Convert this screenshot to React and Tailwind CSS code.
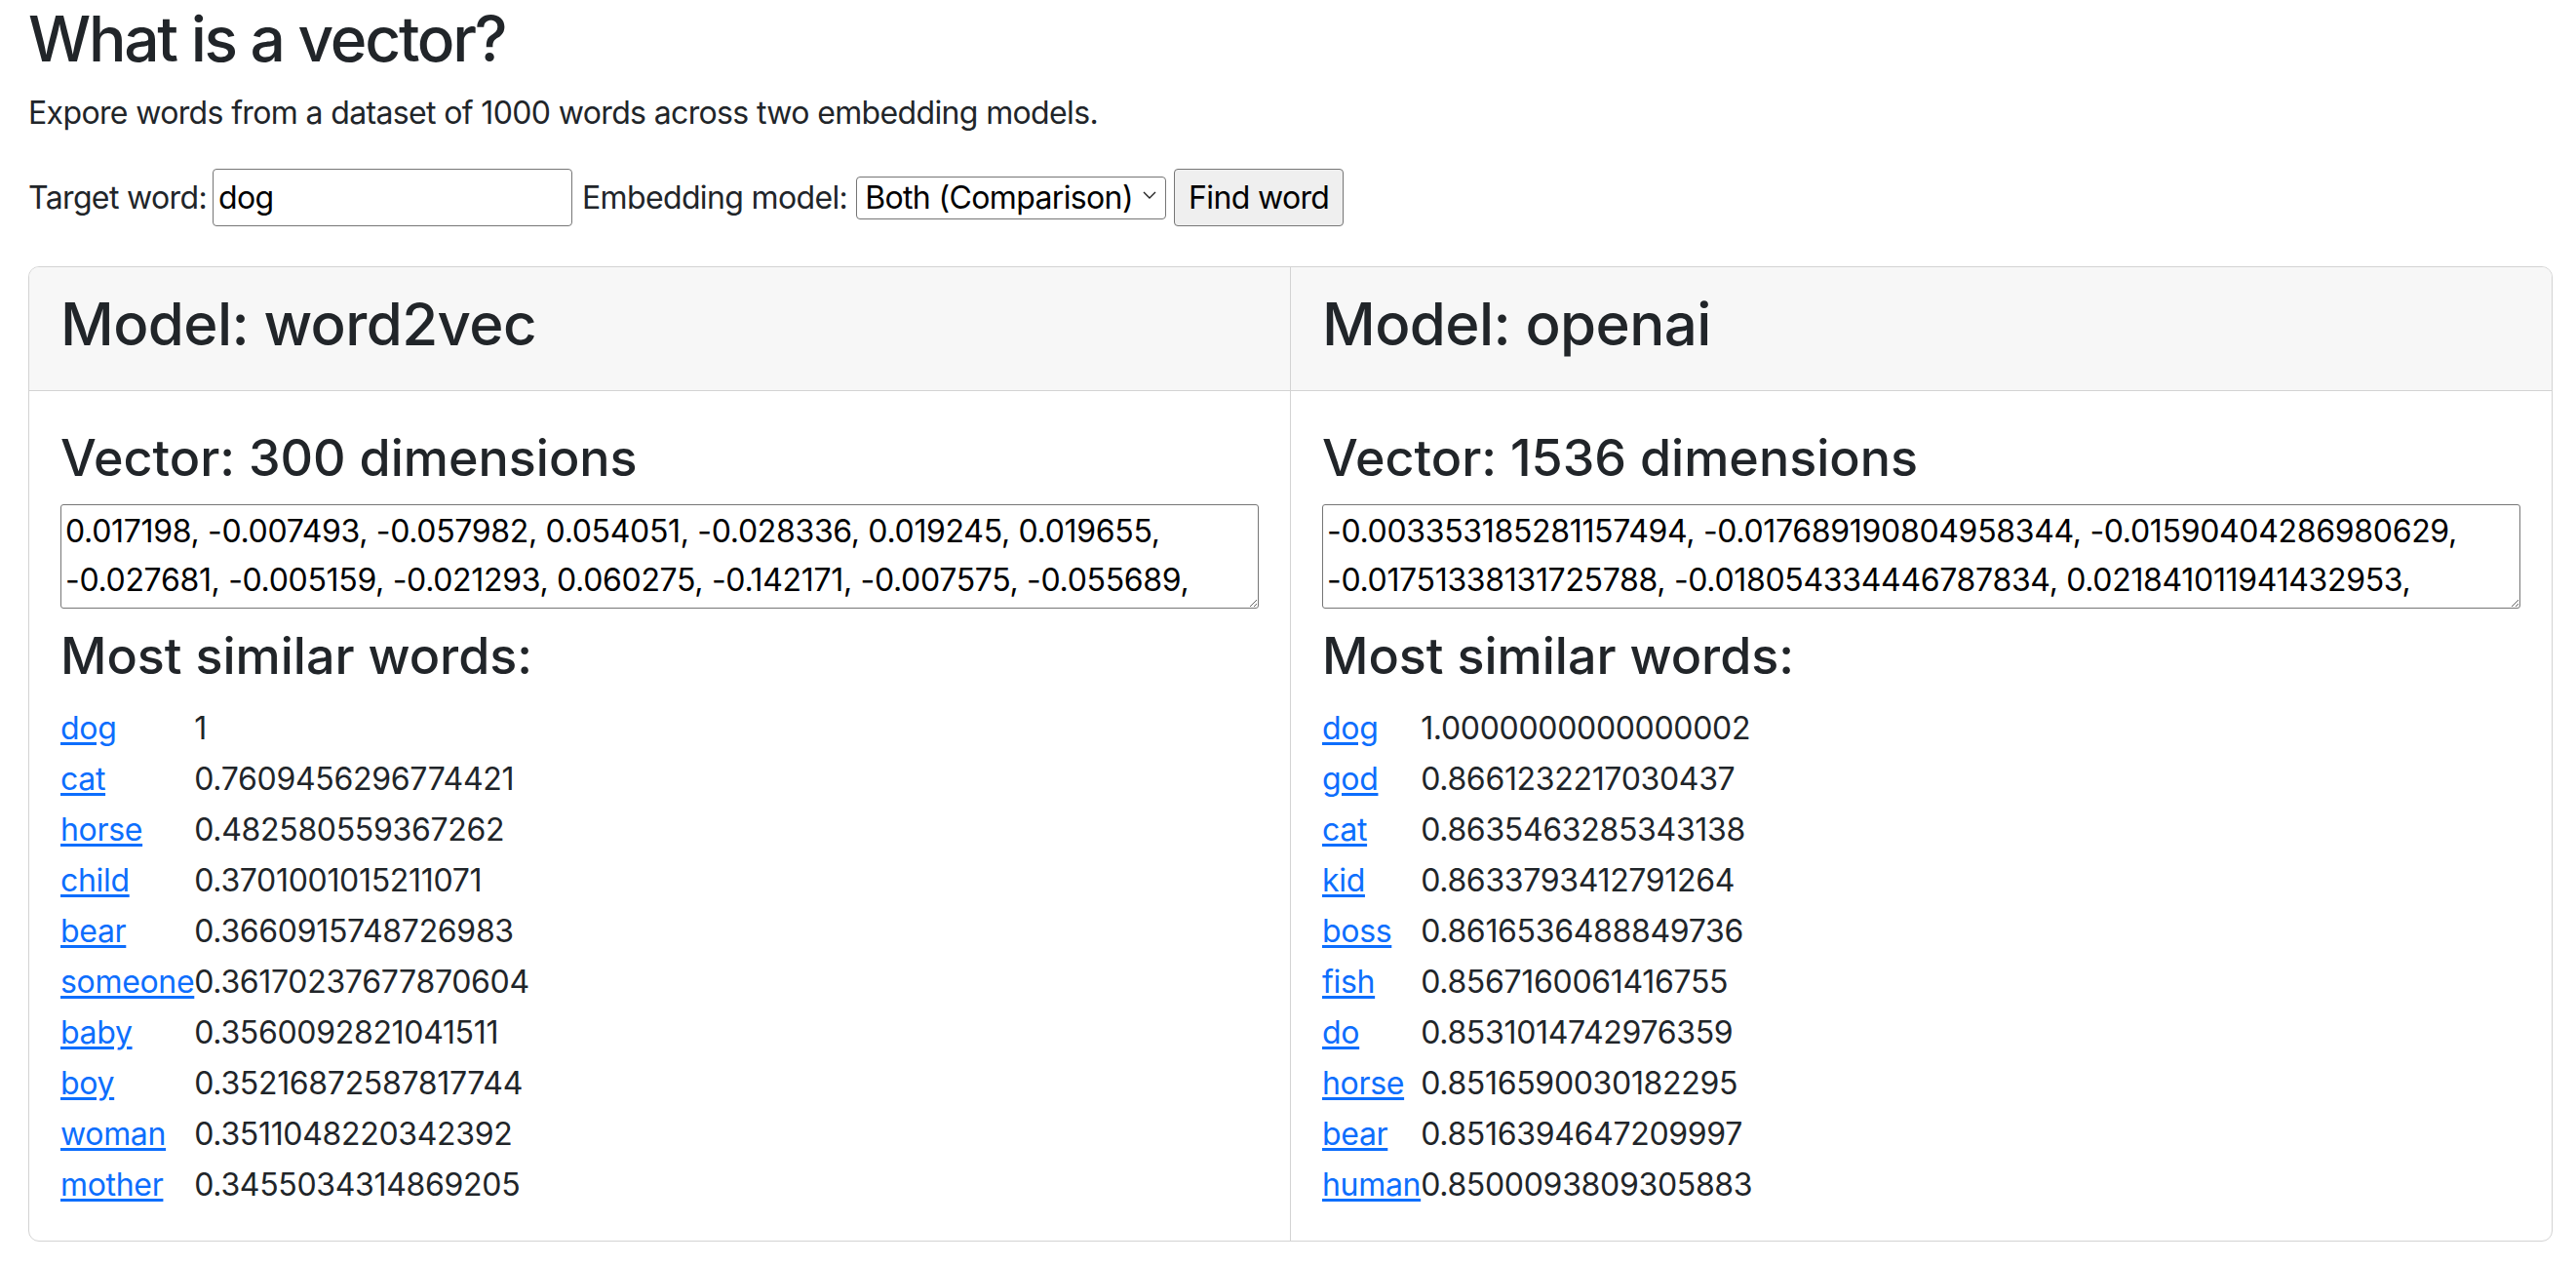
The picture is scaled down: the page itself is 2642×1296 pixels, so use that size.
import { useState } from "react";

const w2v = [
  ["dog", "1"],
  ["cat", "0.7609456296774421"],
  ["horse", "0.482580559367262"],
  ["child", "0.3701001015211071"],
  ["bear", "0.3660915748726983"],
  ["someone", "0.36170237677870604"],
  ["baby", "0.3560092821041511"],
  ["boy", "0.35216872587817744"],
  ["woman", "0.3511048220342392"],
  ["mother", "0.3455034314869205"],
];

const openai = [
  ["dog", "1.0000000000000002"],
  ["god", "0.8661232217030437"],
  ["cat", "0.8635463285343138"],
  ["kid", "0.8633793412791264"],
  ["boss", "0.8616536488849736"],
  ["fish", "0.8567160061416755"],
  ["do", "0.8531014742976359"],
  ["horse", "0.8516590030182295"],
  ["bear", "0.8516394647209997"],
  ["human", "0.8500093809305883"],
];

const w2vVector =
  "0.017198, -0.007493, -0.057982, 0.054051, -0.028336, 0.019245, 0.019655, -0.027681, -0.005159, -0.021293, 0.060275, -0.142171, -0.007575, -0.055689, 0.031406, -0.012987, 0.044102, -0.063398, 0.008815, 0.027743, -0.039216, 0.015532";

const openaiVector =
  "-0.003353185281157494, -0.017689190804958344, -0.01590404286980629, -0.01751338131725788, -0.018054334446787834, 0.021841011941432953, -0.009241856634616852, 0.004318620730191469, -0.02713468112051487";

const ModelColumn = ({ name, dims, vector, words, last }) => (
  <div className={`flex-1 min-w-0 ${last ? "" : "border-r border-[#d3d3d3]"}`}>
    <div className="bg-[#f7f7f7] border-b border-[#d3d3d3] px-[32px] pt-[22px] pb-[32px]">
      <h2 className="text-[60px] leading-[72px] font-medium tracking-[-0.01em]">Model: {name}</h2>
    </div>
    <div className="px-[32px] pt-[38px] pb-[32px]">
      <h3 className="text-[52px] leading-[62px] font-medium">Vector: {dims} dimensions</h3>
      <textarea
        readOnly
        value={vector}
        className="mt-[16px] block w-full h-[107px] border border-[#767676] rounded-[3px] px-[4px] py-[2px] text-[32px] leading-[50px] tracking-[-0.01em] text-black resize-y overflow-hidden outline-none"
      />
      <h3 className="mt-[18px] text-[52px] leading-[62px] font-medium">Most similar words:</h3>
      <div className="mt-[18px] grid grid-cols-[max-content_max-content] gap-y-[2px] text-[32px] leading-[50px] tracking-[-0.01em]">
        {words.map(([word, score]) => (
          <div key={word} className="contents">
            <a href="#" className="text-[#0d6efd] underline underline-offset-[3px]">
              {word}
            </a>
            <span>{score}</span>
          </div>
        ))}
      </div>
    </div>
  </div>
);

const App = () => {
  const [word, setWord] = useState("dog");
  const [model, setModel] = useState("both");

  return (
    <div className="min-h-screen bg-white text-[#212529] font-['Inter','Noto_Sans',sans-serif] pl-[29px] pr-[24px]">
      <h1 className="text-[64px] leading-[79px] font-medium tracking-[-0.035em]">What is a vector?</h1>
      <p className="mt-[12px] text-[32px] leading-[50px] tracking-[-0.02em]">
        Expore words from a dataset of 1000 words across two embedding models.
      </p>

      <form
        className="mt-[32px] flex items-center h-[59px] text-[32px] leading-[50px] tracking-[-0.02em]"
        onSubmit={(e) => e.preventDefault()}
      >
        <label htmlFor="word">Target word:</label>
        <input
          id="word"
          value={word}
          onChange={(e) => setWord(e.target.value)}
          className="ml-[6px] w-[369px] h-[59px] border border-[#767676] rounded-[4px] px-[5px] text-black outline-none"
        />
        <label htmlFor="model" className="ml-[10px]">
          Embedding model:
        </label>
        <div className="relative ml-[9px]">
          <select
            id="model"
            value={model}
            onChange={(e) => setModel(e.target.value)}
            className="appearance-none w-[318px] h-[44px] border border-[#767676] rounded-[4px] pl-[8px] pr-[24px] leading-[40px] text-black bg-white outline-none"
          >
            <option value="both">Both (Comparison)</option>
            <option value="word2vec">word2vec</option>
            <option value="openai">openai</option>
          </select>
          <svg
            className="absolute right-[10px] top-[18px] pointer-events-none"
            width="14"
            height="8"
            viewBox="0 0 14 8"
            fill="none"
          >
            <path d="M1 1L7 7L13 1" stroke="#222" strokeWidth="1.4" />
          </svg>
        </div>
        <button
          type="submit"
          className="ml-[8px] w-[174px] h-[59px] bg-[#efefef] border border-[#767676] rounded-[4px] text-black"
        >
          Find word
        </button>
      </form>

      <div className="mt-[41px] flex border border-[#d3d3d3] rounded-[11px] overflow-hidden">
        <ModelColumn name="word2vec" dims="300" vector={w2vVector} words={w2v} />
        <ModelColumn name="openai" dims="1536" vector={openaiVector} words={openai} last />
      </div>
    </div>
  );
};

export default App;
